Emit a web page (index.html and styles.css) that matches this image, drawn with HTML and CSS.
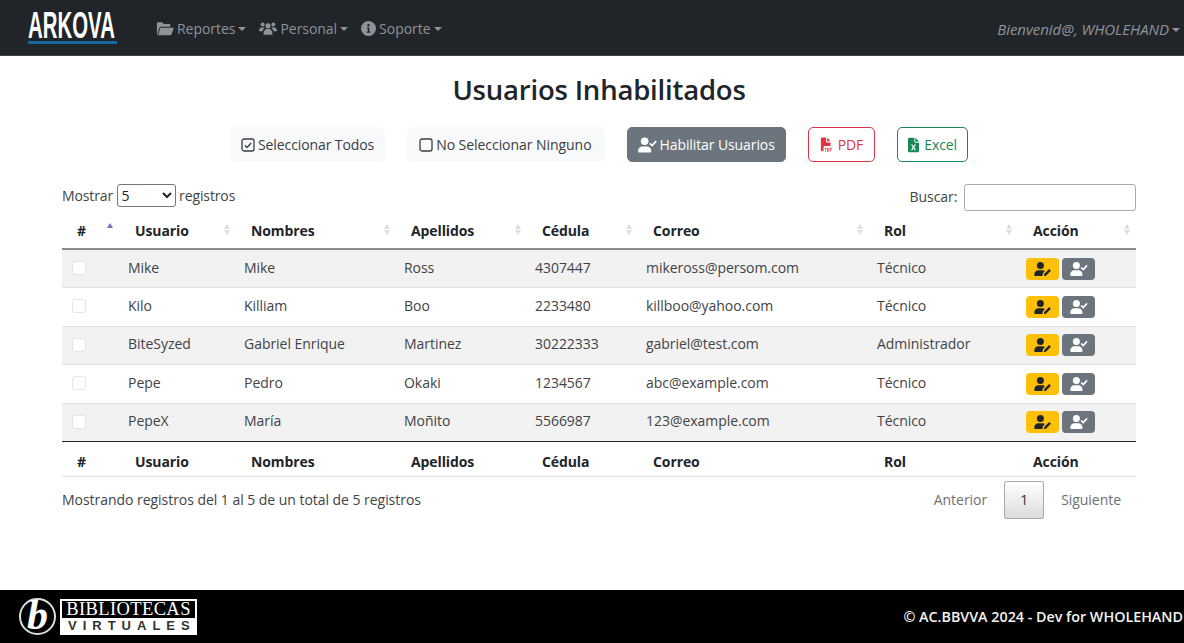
FILE: index.html
```html
<!DOCTYPE html>
<html lang="es">
<head>
  <meta charset="UTF-8">
  <meta name="viewport" content="width=device-width, initial-scale=1.0">
  <title>Usuarios Inhabilitados</title>
  <link rel="stylesheet" href="styles.css">
</head>

<body>
<svg class="icon-defs" aria-hidden="true">
  <symbol id="i-folder" viewBox="0 0 20 16"><path d="M1 15V2.2C1 1.5 1.5 1 2.2 1h4.6l2 2h6c.7 0 1.2.5 1.2 1.2V6H5.200c-.6 0-1.100.3-1.400.9L1.400 15.200zM5.300 7.200h13.500c.6 0 1 .6.8 1.100l-2.500 6.400c-.2.5-.6.8-1.100.8H2.400l2-7.600c.2-.4.5-.7.9-.7z"/></symbol>
  <symbol id="i-users" viewBox="0 0 20 16"><circle cx="4" cy="3.500" r="2.200"/><circle cx="16" cy="3.500" r="2.200"/><circle cx="10" cy="5" r="2.900"/><path d="M0 10.500C0 8.500 1.200 7 3 7h2c.6 0 1 .2 1.400.4C5 8.400 4.200 9.800 4 11H1c-.6 0-1 0-1-.5zM20 10.500C20 8.500 18.800 7 17 7h-2c-.6 0-1 .2-1.400.4 1.400 1 2.200 2.400 2.400 3.600h3c.6 0 1 0 1-.5zM5 14c0-3 2-5.500 3.600-5.500h2.800C13 8.500 15 11 15 14c0 .6-.5 1-1 1H6c-.5 0-1-.4-1-1z"/></symbol>
  <symbol id="i-info" viewBox="0 0 16 16"><path fill-rule="evenodd" d="M8 0a8 8 0 1 0 0 16A8 8 0 0 0 8 0zm0 3.200a1.300 1.300 0 1 1 0 2.600 1.300 1.300 0 0 1 0-2.600zM6.400 7h2.500v4.300h.9v1.300H6.300v-1.300h1V8.300h-.9z"/></symbol>
  <symbol id="i-check-square" viewBox="0 0 14 14"><rect x="1" y="1" width="12" height="12" rx="2" fill="none" stroke="currentColor" stroke-width="1.300"/><path d="M3.800 7.200l2.200 2.200 4.200-4.400" fill="none" stroke="currentColor" stroke-width="1.400"/></symbol>
  <symbol id="i-square" viewBox="0 0 14 14"><rect x="1" y="1" width="12" height="12" rx="2" fill="none" stroke="currentColor" stroke-width="1.300"/></symbol>
  <symbol id="i-user-check" viewBox="0 0 20 16"><circle cx="7" cy="4" r="4"/><path d="M0 14.500C0 11.500 2.300 9.500 4.500 9.500h5c2.200 0 4.500 2 4.500 5 0 .9-.6 1.500-1.300 1.500H1.300C.6 16 0 15.400 0 14.500z"/><path d="M12.500 6.300l2.300 2.300 4.400-4.700" fill="none" stroke="currentColor" stroke-width="1.900"/></symbol>
  <symbol id="i-user-pen" viewBox="0 0 20 16"><circle cx="7" cy="4" r="4"/><path d="M0 14.500C0 11.500 2.300 9.500 4.500 9.500h5c1 0 1.900.3 2.600.9L9.800 13l-.5 3h-8C.6 16 0 15.400 0 14.500z"/><path d="M11 16l.4-2.400 5.600-5.600 2 2-5.600 5.600z"/></symbol>
  <symbol id="i-pdf" viewBox="0 0 16 18"><path d="M1 2c0-1 .7-1.700 1.700-1.700H7V5c0 .6.4 1 1 1h4v4H5.500C4.700 10 4 10.700 4 11.500V16H2.700C1.700 16 1 15.300 1 14.300z"/><path d="M8.200.3L12 4.800H8.200z"/><rect x="5" y="11" width="10.500" height="6" fill="#fff"/><path d="M5.600 12h1.700v1.200H6.400v3.500h-.8zM8.200 12h1.500v4.700H8.200zM11 12h2.800v1H11.900v1h1.500v.9h-1.500v1.800H11z"/></symbol>
  <symbol id="i-excel" viewBox="0 0 12 16"><path fill-rule="evenodd" d="M1.500 0H7v4.500c0 .5.400 1 1 1h4v9c0 .8-.7 1.500-1.500 1.500h-9C.7 16 0 15.300 0 14.500v-13C0 .7.700 0 1.500 0zM3.300 7.500L5.200 10.500l-2 3.200h1.600L6 11.500l1.200 2.200h1.600l-2-3.200 1.900-3H7.100L6 9.500 4.900 7.500z"/><path d="M8 0l4 4.500H8z"/></symbol>
</svg>

<nav class="navbar">
  <a class="brand"><span class="brand-text">ARKOVA</span></a>
  <ul class="nav-menu">
    <li><svg class="ico ico-wide"><use href="#i-folder"/></svg>Reportes<span class="caret"></span></li>
    <li><svg class="ico ico-wide"><use href="#i-users"/></svg>Personal<span class="caret"></span></li>
    <li><svg class="ico"><use href="#i-info"/></svg>Soporte<span class="caret"></span></li>
  </ul>
  <div class="welcome">Bienvenid@, WHOLEHAND<span class="caret"></span></div>
</nav>

<main class="content">
  <h1>Usuarios Inhabilitados</h1>

  <div class="toolbar">
    <button class="btn btn-light"><svg class="ico-sm"><use href="#i-check-square"/></svg>Seleccionar Todos</button>
    <button class="btn btn-light btn-wide"><svg class="ico-sm"><use href="#i-square"/></svg>No Seleccionar Ninguno</button>
    <button class="btn btn-secondary"><svg class="ico-user"><use href="#i-user-check"/></svg>Habilitar Usuarios</button>
    <button class="btn btn-pdf"><svg class="ico-file"><use href="#i-pdf"/></svg>PDF</button>
    <button class="btn btn-excel"><svg class="ico-file"><use href="#i-excel"/></svg>Excel</button>
  </div>

  <div class="table-top">
    <label class="length">Mostrar
      <select><option>5</option></select>
      registros</label>
    <label class="search">Buscar: <input type="text"></label>
  </div>

  <table class="users">
    <thead>
      <tr>
        <th class="sort-asc">#</th>
        <th>Usuario</th>
        <th>Nombres</th>
        <th>Apellidos</th>
        <th>Cédula</th>
        <th>Correo</th>
        <th>Rol</th>
        <th>Acción</th>
      </tr>
    </thead>
    <tbody>
      <tr>
        <td><input type="checkbox"></td><td>Mike</td><td>Mike</td><td>Ross</td><td>4307447</td><td>mikeross@persom.com</td><td>Técnico</td>
        <td class="actions"><a class="act act-edit"><svg><use href="#i-user-pen"/></svg></a><a class="act act-ok"><svg><use href="#i-user-check"/></svg></a></td>
      </tr>
      <tr>
        <td><input type="checkbox"></td><td>Kilo</td><td>Killiam</td><td>Boo</td><td>2233480</td><td>killboo@yahoo.com</td><td>Técnico</td>
        <td class="actions"><a class="act act-edit"><svg><use href="#i-user-pen"/></svg></a><a class="act act-ok"><svg><use href="#i-user-check"/></svg></a></td>
      </tr>
      <tr>
        <td><input type="checkbox"></td><td>BiteSyzed</td><td>Gabriel Enrique</td><td>Martinez</td><td>30222333</td><td>gabriel@test.com</td><td>Administrador</td>
        <td class="actions"><a class="act act-edit"><svg><use href="#i-user-pen"/></svg></a><a class="act act-ok"><svg><use href="#i-user-check"/></svg></a></td>
      </tr>
      <tr>
        <td><input type="checkbox"></td><td>Pepe</td><td>Pedro</td><td>Okaki</td><td>1234567</td><td>abc@example.com</td><td>Técnico</td>
        <td class="actions"><a class="act act-edit"><svg><use href="#i-user-pen"/></svg></a><a class="act act-ok"><svg><use href="#i-user-check"/></svg></a></td>
      </tr>
      <tr>
        <td><input type="checkbox"></td><td>PepeX</td><td>María</td><td>Moñito</td><td>5566987</td><td>123@example.com</td><td>Técnico</td>
        <td class="actions"><a class="act act-edit"><svg><use href="#i-user-pen"/></svg></a><a class="act act-ok"><svg><use href="#i-user-check"/></svg></a></td>
      </tr>
    </tbody>
    <tfoot>
      <tr>
        <th>#</th><th>Usuario</th><th>Nombres</th><th>Apellidos</th><th>Cédula</th><th>Correo</th><th>Rol</th><th>Acción</th>
      </tr>
    </tfoot>
  </table>

  <div class="table-bottom">
    <div class="info">Mostrando registros del 1 al 5 de un total de 5 registros</div>
    <div class="pager">
      <a>Anterior</a>
      <a class="current">1</a>
      <a>Siguiente</a>
    </div>
  </div>
</main>

<footer class="footer">
  <div class="footer-logo">
    <span class="logo-b">b</span>
    <div class="logo-box">
      <span class="logo-top">BIBLIOTECAS</span>
      <span class="logo-bottom">VIRTUALES</span>
    </div>
  </div>
  <div class="copy">© AC.BBVVA 2024 - Dev for WHOLEHAND</div>
</footer>
</body>
</html>
```

FILE: styles.css
```css
/* base */
* {
  box-sizing: border-box;
}

body {
  margin: 0;
  min-height: 100vh;
  display: flex;
  flex-direction: column;
  font-family: "Open Sans", "Noto Sans", sans-serif;
  font-size: 14px;
  letter-spacing: -0.04px;
  color: #3f4347;
  background-color: #fff;
}

.icon-defs {
  display: none;
}

svg {
  fill: currentColor;
}

/* navbar */
.navbar {
  height: 56px;
  flex: none;
  display: flex;
  align-items: center;
  padding: 0 4px 0 28px;
  background-color: #212529;
  border-bottom: 1px solid #3d4146;
  color: #8f9397;
}

.brand {
  width: 89px;
  height: 32px;
  border-bottom: 3px solid #1668a0;
  margin-top: 1px;
  display: block;
}

.brand-text {
  display: block;
  width: 104px;
  font-family: "Liberation Sans", sans-serif;
  font-weight: 700;
  font-size: 24px;
  line-height: 28px;
  letter-spacing: 0;
  color: #fff;
  transform-origin: left center;
  transform: scale(0.85, 1.55);
  white-space: nowrap;
}

.nav-menu {
  list-style: none;
  display: flex;
  gap: 13px;
  margin: 2px 0 0 39px;
  padding: 0;
}

.nav-menu li {
  display: flex;
  align-items: center;
}

.ico {
  width: 15px;
  height: 15px;
  margin-right: 3px;
}

.ico-wide {
  width: 18px;
  height: 15px;
}

.caret {
  display: inline-block;
  margin-left: 3px;
  border-top: 4px solid currentColor;
  border-left: 4px solid transparent;
  border-right: 4px solid transparent;
  vertical-align: middle;
}

.welcome {
  margin: 2px 0 0 auto;
  font-size: 15px;
  font-style: italic;
}

/* main */
.content {
  flex: 1;
  padding: 0 48px 0 62px;
}

h1 {
  margin: 16px 0 0;
  text-align: center;
  font-size: 27.5px;
  line-height: 36px;
  font-weight: 600;
  letter-spacing: -0.2px;
  color: #212529;
}

.toolbar {
  display: flex;
  justify-content: center;
  gap: 22px;
  margin-top: 19px;
}

.btn {
  height: 35px;
  padding: 0 10px;
  display: flex;
  align-items: center;
  gap: 3px;
  font-family: inherit;
  font-size: 14px;
  letter-spacing: -0.1px;
  border: 1px solid transparent;
  border-radius: 5px;
  background: none;
}

.btn-wide {
  padding: 0 12px 0 11px;
  letter-spacing: -0.05px;
}

.btn-light {
  background-color: #f8f9fa;
  border-color: #f8f9fa;
  color: #3a3e42;
}

.btn-secondary {
  background-color: #6c757d;
  border-color: #6c757d;
  color: #fff;
}

.btn-pdf {
  gap: 4px;
  padding: 0 11px;
  border-color: #dc3545;
  color: #dc3545;
}

.btn-excel {
  gap: 5px;
  border-color: #198754;
  color: #198754;
}

.ico-sm {
  width: 14px;
  height: 14px;
}

.ico-user {
  width: 19px;
  height: 16px;
}

.ico-file {
  width: 14px;
  height: 16px;
}

.btn-excel .ico-file {
  width: 11px;
}

.table-top {
  display: flex;
  justify-content: space-between;
  align-items: center;
  margin-top: 22px;
  height: 27px;
}

.length {
  margin-bottom: 4px;
  letter-spacing: -0.12px;
}

.table-top select {
  width: 59px;
  height: 23px;
  font-family: inherit;
  font-size: 14px;
  border: 1px solid #767676;
  border-radius: 3px;
  background-color: #fff;
  color: #212529;
  padding: 0;
}

.search input {
  width: 172px;
  height: 27px;
  margin-left: 3px;
  border: 1px solid #aaa;
  border-radius: 3px;
}

/* table */
.users {
  width: 1074px;
  margin-top: 1px;
  table-layout: fixed;
  border-collapse: collapse;
}

.users th:nth-child(1) { width: 58px; }
.users th:nth-child(2) { width: 116px; }
.users th:nth-child(3) { width: 160px; }
.users th:nth-child(4) { width: 131px; }
.users th:nth-child(5) { width: 111px; }
.users th:nth-child(6) { width: 231px; }
.users th:nth-child(7) { width: 149px; }

.users th {
  position: relative;
  height: 37px;
  padding: 0 0 0 15px;
  text-align: left;
  font-weight: 700;
  letter-spacing: -0.1px;
  color: #212529;
  white-space: nowrap;
}

.users thead th {
  border-bottom: 2px solid #8a8c8e;
}

.users thead th::before,
.users thead th::after {
  content: "";
  position: absolute;
  right: 6px;
  border-left: 3px solid transparent;
  border-right: 3px solid transparent;
}

.users thead th::before {
  top: 12px;
  border-bottom: 5px solid #dcdfe2;
}

.users thead th::after {
  top: 18px;
  border-top: 5px solid #dcdfe2;
}

.users thead th.sort-asc::before {
  top: 11px;
  right: 7px;
  border-left-width: 3.5px;
  border-right-width: 3.5px;
  border-bottom-color: #6f72c4;
}

.users thead th.sort-asc::after {
  border: none;
}

.users td {
  height: 38.5px;
  padding: 0 8px 3px;
  border-bottom: 1px solid #dee2e6;
  white-space: nowrap;
}

.users tbody tr:nth-child(odd) td {
  background-color: #f2f2f2;
}

.users tbody tr:last-child td {
  border-bottom: 1px solid #212529;
}

.users tfoot th {
  height: 35px;
  padding-top: 5px;
  border-bottom: 1px solid #dee2e6;
}

.users td input {
  display: block;
  width: 14px;
  height: 14px;
  margin: 2px 0 0 2px;
  appearance: none;
  background-color: #fff;
  border: 1px solid #e3e5e7;
  border-radius: 3px;
}

.users td.actions {
  padding-bottom: 0;
}

.act {
  display: inline-flex;
  align-items: center;
  justify-content: center;
  width: 33px;
  height: 22px;
  border-radius: 4px;
  vertical-align: middle;
  margin-right: 3px;
}

.act svg {
  width: 20px;
  height: 14px;
}

.act-edit {
  background-color: #ffc107;
  color: #212529;
}

.act-ok {
  background-color: #6c757d;
  color: #fff;
}

.table-bottom {
  display: flex;
  justify-content: space-between;
  align-items: center;
  width: 1074px;
  margin-top: 4px;
}

.info {
  margin-bottom: 2px;
}

.pager {
  display: flex;
  align-items: center;
  color: #6d7075;
}

.pager a {
  padding: 0 15px;
  line-height: 36px;
}

.pager .current {
  width: 40px;
  height: 38px;
  margin: 0 2px;
  padding: 0;
  text-align: center;
  border: 1px solid #aaa;
  border-radius: 2px;
  color: #333;
  background: linear-gradient(to bottom, #fff 0%, #dcdcdc 100%);
}

/* footer */
.footer {
  height: 53px;
  flex: none;
  display: flex;
  align-items: center;
  justify-content: space-between;
  padding: 0 1px 0 19px;
  background-color: #000;
  color: #f2f2f2;
}

.footer-logo {
  display: flex;
  align-items: center;
  gap: 4px;
}

.logo-b {
  width: 37px;
  height: 37px;
  border: 2px solid #ddd;
  border-radius: 50%;
  text-align: center;
  font-family: "Liberation Serif", serif;
  font-style: italic;
  font-weight: 700;
  font-size: 42px;
  line-height: 30px;
  color: #fff;
  letter-spacing: 0;
}

.logo-box {
  width: 137px;
  height: 36px;
  display: flex;
  flex-direction: column;
  border: 2px solid #fff;
  background-color: #fff;
  text-align: center;
}

.logo-top {
  height: 17px;
  font-family: "Liberation Serif", serif;
  font-size: 18.5px;
  line-height: 17px;
  letter-spacing: 0.4px;
  color: #fff;
  background-color: #000;
  white-space: nowrap;
}

.logo-bottom {
  font-family: "Liberation Sans", sans-serif;
  font-size: 13px;
  font-weight: 700;
  line-height: 15px;
  letter-spacing: 6px;
  padding-left: 6px;
  color: #333;
}

.copy {
  font-weight: 600;
  font-size: 14.3px;
  letter-spacing: 0;
}
```
